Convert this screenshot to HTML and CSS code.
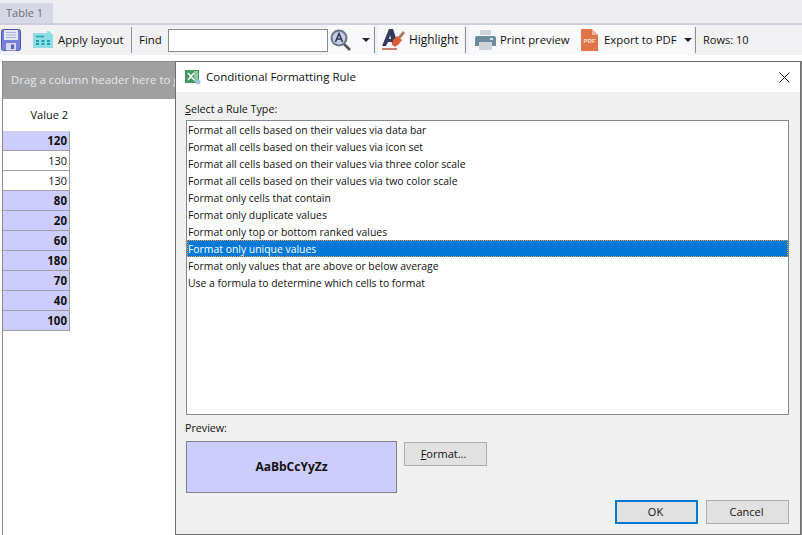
FILE: index.html
```html
<!DOCTYPE html>
<html lang="en">
<head>
<meta charset="utf-8">
<title>Conditional Formatting Rule</title>
<link rel="stylesheet" href="styles.css">
</head>
<body>
<div class="tabstrip"><div class="tab">Table 1</div></div>
<div class="toolbar">
  <div class="tool tool-save">
    <svg width="20" height="22" viewBox="0 0 20 22"><rect x="0.5" y="0.5" width="19" height="21" rx="2" fill="#7580d6" stroke="#4c54a8"/><rect x="3" y="1" width="14" height="10" fill="#e4e6f4"/><path d="M5 3.500h10M5 6h10M5 8.500h10" stroke="#aab0dc"/><rect x="5" y="14" width="10" height="7.500" fill="#d6d9ee"/><rect x="10" y="15.500" width="3" height="4.500" fill="#5a62b8"/></svg>
  </div>
  <div class="tool tool-apply">
    <svg width="20" height="18" viewBox="0 0 20 18"><path d="M0 2h14V0l2 0 4 4v13H0z" fill="#90dde6"/><path d="M3 5.500h8" stroke="#1ba0b2" stroke-width="1.500"/><g fill="#1ba0b2"><rect x="3" y="9" width="3" height="2"/><rect x="8.500" y="9" width="3" height="2"/><rect x="14" y="9" width="3" height="2"/><rect x="3" y="12" width="3" height="2"/><rect x="8.500" y="12" width="3" height="2"/><rect x="14" y="12" width="3" height="2"/></g></svg>
    <span>Apply layout</span>
  </div>
  <div class="sep"></div>
  <div class="tool tool-find"><span>Find</span></div>
  <div class="findbox"></div>
  <div class="tool tool-search">
    <svg width="22" height="24" viewBox="0 0 22 24"><path d="M13 15l7 7" stroke="#4a5560" stroke-width="2.500"/><circle cx="9" cy="10" r="7.500" fill="#c4cbe6" stroke="#6c7682" stroke-width="2"/><path d="M5.500 14L9 5.500 12.500 14M6.800 11h4.400" fill="none" stroke="#2c3450" stroke-width="1.500"/></svg>
    <i class="caret"></i>
  </div>
  <div class="sep sep-search"></div>
  <div class="tool tool-highlight">
    <svg width="24" height="22" viewBox="0 0 24 22"><path d="M0 17L7 0h4l3 9-3 8-1.500-4H6l-2 4z" fill="#343a5c"/><path d="M7 10h2L8 6z" fill="#f4f4f6"/><path d="M16 8l5-6 2 2-5 6z" fill="#a5765a"/><path d="M11 11l4-4 5 4-3 4-4 3-3-3z" fill="#dd5a33"/><rect x="0" y="19" width="15" height="2" fill="#c9806c"/></svg>
    <span>Highlight</span>
  </div>
  <div class="sep sep-highlight"></div>
  <div class="tool tool-print">
    <svg width="21" height="20" viewBox="0 0 21 20"><rect x="5" y="0" width="11" height="5" fill="#ccd5d9"/><path d="M0 8q0-2 2-2h17q2 0 2 2v8H0z" fill="#6e8b9e"/><rect x="15" y="8" width="3" height="2" fill="#d8e0e4"/><rect x="4" y="12" width="13" height="8" fill="#ccd5d9"/></svg>
    <span>Print preview</span>
  </div>
  <div class="tool tool-pdf">
    <svg width="17" height="22" viewBox="0 0 17 22"><path d="M0 0h11l6 6v16H0z" fill="#e0734a"/><path d="M11 0l6 6h-6z" fill="#f0b49c"/><text x="8.500" y="14" class="pdf-text">PDF</text></svg>
    <span>Export to PDF</span>
    <i class="caret"></i>
  </div>
  <div class="sep sep-pdf"></div>
  <div class="tool tool-rows"><span>Rows: 10</span></div>
</div>

<div class="grid">
  <div class="groupbar">Drag a column header here to group by that column</div>
  <div class="col">
    <div class="col-head">Value 2</div>
    <div class="cell hit">120</div>
    <div class="cell">130</div>
    <div class="cell">130</div>
    <div class="cell hit">80</div>
    <div class="cell hit">20</div>
    <div class="cell hit">60</div>
    <div class="cell hit">180</div>
    <div class="cell hit">70</div>
    <div class="cell hit">40</div>
    <div class="cell hit">100</div>
  </div>
</div>

<div class="dialog">
  <div class="titlebar">
    <svg class="xl" width="16" height="15" viewBox="0 0 16 15"><rect width="14" height="13" fill="#3f9a5c"/><rect x="9" y="1" width="4" height="11" fill="#8cc9a0"/><path d="M3 3l6 7M9 3l-6 7" stroke="#fff" stroke-width="1.600"/><circle cx="13" cy="12" r="2.500" fill="#9fc4e6"/></svg>
    <span class="title">Conditional Formatting Rule</span>
    <svg class="close" width="11" height="11" viewBox="0 0 11 11"><path d="M.5.500l10 10M10.500.500l-10 10" stroke="#111" fill="none"/></svg>
  </div>
  <div class="dialog-body">
    <div class="label"><u>S</u>elect a Rule Type:</div>
    <div class="list">
      <div class="item">Format all cells based on their values via data bar</div>
      <div class="item">Format all cells based on their values via icon set</div>
      <div class="item">Format all cells based on their values via three color scale</div>
      <div class="item">Format all cells based on their values via two color scale</div>
      <div class="item">Format only cells that contain</div>
      <div class="item">Format only duplicate values</div>
      <div class="item">Format only top or bottom ranked values</div>
      <div class="item selected">Format only unique values</div>
      <div class="item">Format only values that are above or below average</div>
      <div class="item">Use a formula to determine which cells to format</div>
    </div>
    <div class="label preview-label">Preview:</div>
    <div class="preview-row">
      <div class="preview">AaBbCcYyZz</div>
      <button class="btn btn-format"><u>F</u>ormat...</button>
    </div>
    <div class="actions">
      <button class="btn btn-ok">OK</button>
      <button class="btn">Cancel</button>
    </div>
  </div>
</div>
</body>
</html>
```
FILE: styles.css
```css
* { box-sizing: border-box; }
html, body { margin: 0; height: 100%; }
body {
  width: 802px;
  height: 535px;
  overflow: hidden;
  position: relative;
  background: #ffffff;
  font-family: "Open Sans", "Noto Sans", sans-serif;
  font-size: 11.4px;
  color: #111;
}
.tabstrip {
  height: 25px;
  padding-top: 3px;
  background: #eeeef2;
  border-bottom: 2px solid #ccceDB;
}
.tab {
  width: 53px;
  height: 20px;
  background: #d6d8e6;
  color: #6d6d75;
  padding-left: 6px;
  line-height: 20px;
  font-size: 11px;
}
.toolbar {
  height: 30px;
  display: flex;
  align-items: center;
  background: #f1f1f3;
}
.tool { display: flex; align-items: center; height: 30px; white-space: nowrap; flex: none; }
.tool svg, .tool .caret { flex: none; }
.tool span { margin-top: -2px; }
.tool-save { padding-left: 1px; width: 33px; }
.tool-apply { gap: 5px; width: 98px; }
.sep { width: 1px; height: 26px; background: #8f8f93; flex: none; }
.tool-find { padding-left: 7px; width: 36px; }
.findbox { width: 160px; height: 23px; background: #fff; border: 1px solid #8a8a8a; flex: none; }
.tool-search { width: 45px; background: #f9f9fb; padding-left: 2px; }
.caret { width: 0; height: 0; border: 4px solid transparent; border-top-color: #222; border-bottom: 0; display: block; }
.tool-search .caret { margin-left: 10px; }
.sep-search { margin-left: 1px; }
.tool-highlight { gap: 3px; background: #f9f9fb; width: 86px; padding-left: 4px; margin-left: 3px; font-size: 11.9px; }
.sep-highlight { margin-left: 1px; }
.tool-print { gap: 4px; background: #f9f9fb; width: 112px; padding-left: 6px; margin-left: 3px; font-size: 11.3px; }
.tool-pdf { gap: 6px; background: #f9f9fb; width: 112px; }
.tool-pdf .caret { margin-left: 1px; }
.sep-pdf { margin-left: 2px; }
.pdf-text { font-size: 6px; font-weight: 700; fill: #fbe4d8; text-anchor: middle; font-family: "Liberation Sans", sans-serif; }
.tool-rows { padding-left: 7px; font-size: 11px; }

.grid {
  margin: 6px 0 0 2px;
  height: 474px;
  width: 800px;
  border: 1px solid #8a8a8a;
  border-bottom: 0;
  background: #fff;
}
.groupbar {
  height: 37px;
  line-height: 36px;
  background: #a0a0a0;
  color: #e9e9e9;
  padding-left: 8px;
  white-space: nowrap;
  overflow: hidden;
}
.col { width: 67px; font-size: 11px; }
.col-head { height: 32px; line-height: 32px; text-align: right; padding-right: 2px; }
.cell {
  height: 20px;
  line-height: 19px;
  text-align: right;
  padding-right: 2px;
  border-bottom: 1px solid #a0a0a0;
  border-right: 1px solid #a0a0a0;
}
.cell.hit { background: #ccccff; font-weight: 700; font-size: 11.5px; }

.dialog {
  position: absolute;
  left: 175px;
  top: 61px;
  width: 626px;
  height: 474px;
  display: flex;
  flex-direction: column;
  background: #f0f0f0;
  border: 1px solid #6e6e6e;
}
.titlebar {
  height: 30px;
  flex: none;
  background: #fff;
  display: flex;
  align-items: center;
  padding: 0 10px 0 9px;
}
.title { margin-left: 5px; font-size: 11.5px; flex: 1; margin-top: -1px; }
.dialog-body { flex: 1; padding: 9px 11px 0 10px; display: flex; flex-direction: column; }
.label { height: 16px; line-height: 16px; font-size: 10.7px; margin-left: -1px; }
.list {
  margin-top: 3px;
  height: 295px;
  background: #fff;
  border: 1px solid #828790;
}
.item { height: 17px; line-height: 19px; padding-left: 1px; white-space: nowrap; font-size: 10.4px; }
.item.selected { background: #0078d7; color: #fff; outline: 1px dotted #f0a050; outline-offset: -1px; }
.preview-label { margin-top: 5px; }
.preview-row { display: flex; margin-top: 5px; align-items: flex-start; }
.preview {
  width: 211px;
  height: 52px;
  background: #ccccff;
  border: 1px solid #80808a;
  text-align: center;
  line-height: 50px;
  font-weight: 700;
  font-size: 12px;
}
.btn {
  width: 83px;
  height: 24px;
  padding: 0 2px 2px 0;
  font: inherit;
  font-size: 11px;
  color: #111;
  background: #e1e1e1;
  border: 1px solid #adadad;
}
.btn-format { margin: 1px 0 0 7px; padding-right: 4px; }
.actions { display: flex; justify-content: flex-end; gap: 8px; margin-top: 7px; }
.btn-ok { border: 2px solid #0078d7; }
```
